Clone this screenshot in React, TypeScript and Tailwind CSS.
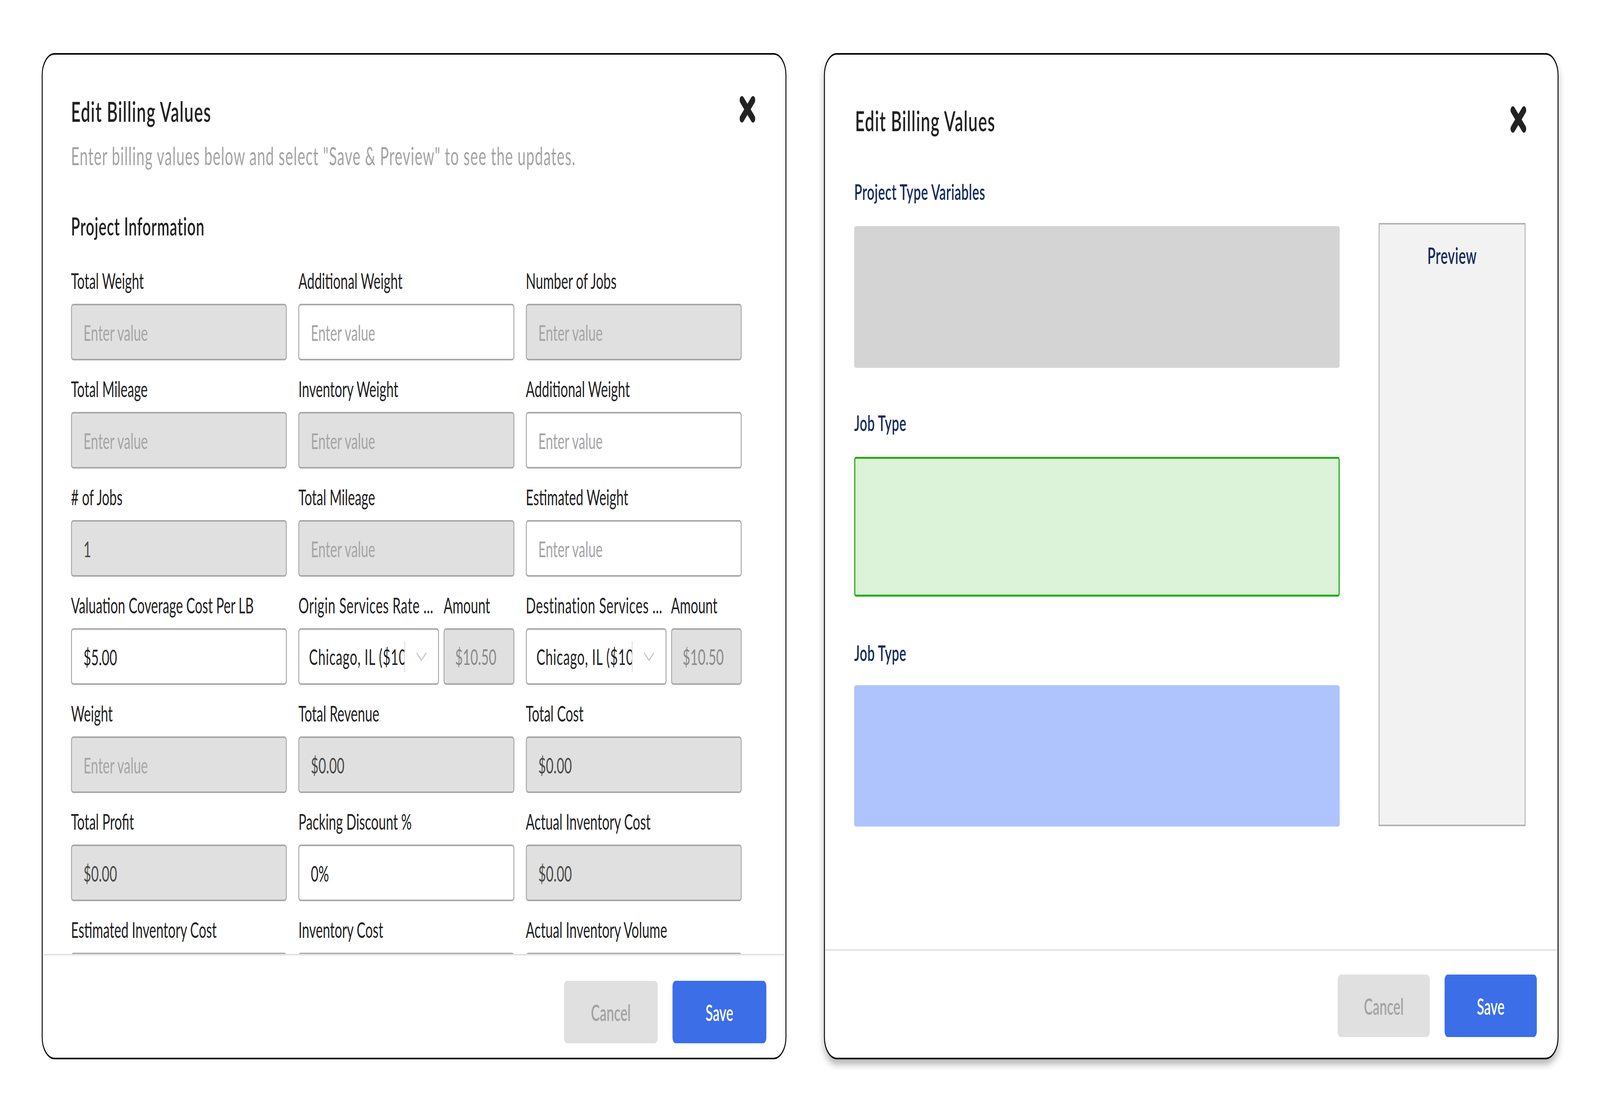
import React, { useLayoutEffect, useState } from "react";

type FieldDef = {
  label: string;
  value?: string;
  disabled?: boolean;
  kind?: "input" | "rate";
};

const rows: FieldDef[][] = [
  [
    { label: "Total Weight", disabled: true },
    { label: "Additional Weight" },
    { label: "Number of Jobs", disabled: true },
  ],
  [
    { label: "Total Mileage", disabled: true },
    { label: "Inventory Weight", disabled: true },
    { label: "Additional Weight" },
  ],
  [
    { label: "# of Jobs", value: "1", disabled: true },
    { label: "Total Mileage", disabled: true },
    { label: "Estimated Weight" },
  ],
  [
    { label: "Valuation Coverage Cost Per LB", value: "$5.00" },
    { label: "Origin Services Rate ...", kind: "rate" },
    { label: "Destination Services ...", kind: "rate" },
  ],
  [
    { label: "Weight", disabled: true },
    { label: "Total Revenue", value: "$0.00", disabled: true },
    { label: "Total Cost", value: "$0.00", disabled: true },
  ],
  [
    { label: "Total Profit", value: "$0.00", disabled: true },
    { label: "Packing Discount %", value: "0%" },
    { label: "Actual Inventory Cost", value: "$0.00", disabled: true },
  ],
  [
    { label: "Estimated Inventory Cost", disabled: true },
    { label: "Inventory Cost" },
    { label: "Actual Inventory Volume", disabled: true },
  ],
];

const CloseIcon = () => (
  <svg width="68" height="68" viewBox="0 0 68 68">
    <path d="M10 10 L58 58 M58 10 L10 58" stroke="#222" strokeWidth="20" strokeLinecap="round" />
  </svg>
);

const Chevron = () => (
  <svg width="48" height="26" viewBox="0 0 48 26">
    <polyline points="3,3 24,22 45,3" fill="none" stroke="#c9c9c9" strokeWidth="4" />
  </svg>
);

const TextBox = ({ value, disabled }: { value?: string; disabled?: boolean }) => (
  <input
    readOnly
    value={value ?? ""}
    placeholder="Enter value"
    className={`h-[145px] w-full rounded-[10px] border-[4px] border-[#a8a8a8] px-[50px] text-[57px] outline-none placeholder:text-[#a5a5a5] ${
      disabled ? "bg-[#e0e0e0] text-[#4a4a4a]" : "bg-white text-[#222]"
    }`}
  />
);

const Field = ({ f }: { f: FieldDef }) => {
  if (f.kind === "rate") {
    return (
      <div className="flex gap-[20px]">
        <div className="flex w-[610px] flex-col">
          <div className="mb-[26px] truncate text-[57px] leading-[68px] tracking-[0.02em] text-[#222]">{f.label}</div>
          <div className="flex h-[145px] items-center rounded-[10px] border-[4px] border-[#a8a8a8] bg-white">
            <div className="w-[456px] overflow-hidden whitespace-nowrap pl-[42px] text-[57px] tracking-[0.025em] text-[#222]">
              Chicago, IL ($10.50)
            </div>
            <div className="h-[80px] w-[2px] bg-[#c4c4c4]" />
            <div className="flex flex-1 items-center justify-center">
              <Chevron />
            </div>
          </div>
        </div>
        <div className="flex flex-1 flex-col">
          <div className="mb-[26px] text-[57px] leading-[68px] text-[#222]">Amount</div>
          <div className="flex h-[145px] items-center rounded-[10px] border-[4px] border-[#a8a8a8] bg-[#e0e0e0] px-[46px] text-[57px] text-[#8a8a8a]">
            $10.50
          </div>
        </div>
      </div>
    );
  }
  return (
    <div className="flex flex-col">
      <div className="mb-[26px] text-[57px] leading-[68px] text-[#222]">{f.label}</div>
      <TextBox value={f.value} disabled={f.disabled} />
    </div>
  );
};

const Footer = ({ pt, pr, w }: { pt: string; pr: string; w: string }) => (
  <div className={`flex flex-1 justify-end gap-[64px] border-t-[4px] border-[#e2e2e2] ${pt} ${pr}`}>
    <button className={`h-[160px] ${w} rounded-[14px] bg-[#e0e0e0] text-[58px] font-semibold text-[#a3a3a3]`}>
      Cancel
    </button>
    <button className={`h-[160px] ${w} rounded-[14px] bg-[#3c6ee8] text-[58px] font-semibold text-white`}>
      Save
    </button>
  </div>
);

// the design is drawn at 6940x2848; fit it to whatever viewport we actually get
const readSize = () => ({ w: window.innerWidth, h: window.innerHeight });

export default function App() {
  const [vp, setVp] = useState(readSize);

  useLayoutEffect(() => {
    const onResize = () => setVp(readSize());
    onResize();
    window.addEventListener("resize", onResize);
    return () => window.removeEventListener("resize", onResize);
  }, []);

  const sx = vp.w / 6940;
  const sy = vp.h / 2848;

  return (
    <div className="h-screen w-screen overflow-hidden bg-white">
      <div
        className="flex h-[2848px] w-[6940px] gap-[163px] bg-white pl-[181px] pt-[136px] font-['Lato',sans-serif]"
        style={{ transform: `scale(${sx}, ${sy})`, transformOrigin: "0 0" }}
      >
        {/* left modal */}
        <div className="relative flex h-[2577px] w-[3230px] flex-col overflow-hidden rounded-[56px] border-[4px] border-black bg-white">
          <button className="absolute right-[131px] top-[106px]">
            <CloseIcon />
          </button>
          <div className="h-[2303px] overflow-hidden pl-[123px] pr-[190px] pt-[101px]">
            <h2 className="text-[72px] font-semibold leading-[86px] tracking-[0.035em] text-[#222]">Edit Billing Values</h2>
            <p className="mt-[34px] text-[63px] leading-[76px] tracking-[0.035em] text-[#a3a3a3]">
              Enter billing values below and select "Save &amp; Preview" to see the updates.
            </p>
            <h3 className="mt-[103px] text-[64px] font-semibold leading-[77px] tracking-[0.025em] text-[#222]">
              Project Information
            </h3>
            <div className="mt-[67px] grid grid-cols-3 gap-x-[50px] gap-y-[38px]">
              {rows.flat().map((f, i) => (
                <Field key={i} f={f} />
              ))}
            </div>
          </div>
          <Footer pt="pt-[65px]" pr="pr-[83px]" w="w-[407px]" />
        </div>

        {/* right modal */}
        <div className="relative flex h-[2577px] w-[3186px] flex-col overflow-hidden rounded-[56px] border-[4px] border-black bg-white shadow-[0_14px_22px_rgba(0,0,0,0.28)]">
          <button className="absolute right-[136px] top-[132px]">
            <CloseIcon />
          </button>
          <div className="h-[2291px] overflow-hidden pl-[127px] pt-[125px]">
            <h2 className="pl-[4px] text-[72px] font-semibold leading-[86px] tracking-[0.035em] text-[#222]">
              Edit Billing Values
            </h2>
            <div className="mt-[106px] flex">
              <div className="flex w-[2106px] flex-col">
                <div className="text-[56px] font-semibold leading-[67px] tracking-[0.02em] text-[#132b60]">
                  Project Type Variables
                </div>
                <div className="mt-[55px] h-[363px] rounded-[8px] bg-[#d4d4d4]" />
                <div className="mt-[107px] text-[56px] font-semibold leading-[67px] tracking-[0.02em] text-[#132b60]">
                  Job Type
                </div>
                <div className="mt-[54px] h-[358px] rounded-[8px] border-[5px] border-[#22ad15] bg-[#dcf3d9]" />
                <div className="mt-[110px] text-[56px] font-semibold leading-[67px] tracking-[0.02em] text-[#132b60]">
                  Job Type
                </div>
                <div className="mt-[50px] h-[362px] rounded-[8px] bg-[#afc4fd]" />
              </div>
              <div className="ml-[169px] mt-[114px] h-[1545px] w-[637px] border-[4px] border-[#b3b3b3] bg-[#f2f2f2] pt-[44px] text-center text-[58px] font-semibold leading-[70px] tracking-[0.02em] text-[#132b60]">
                Preview
              </div>
            </div>
          </div>
          <Footer pt="pt-[61px]" pr="pr-[90px]" w="w-[400px]" />
        </div>
      </div>
    </div>
  );
}
